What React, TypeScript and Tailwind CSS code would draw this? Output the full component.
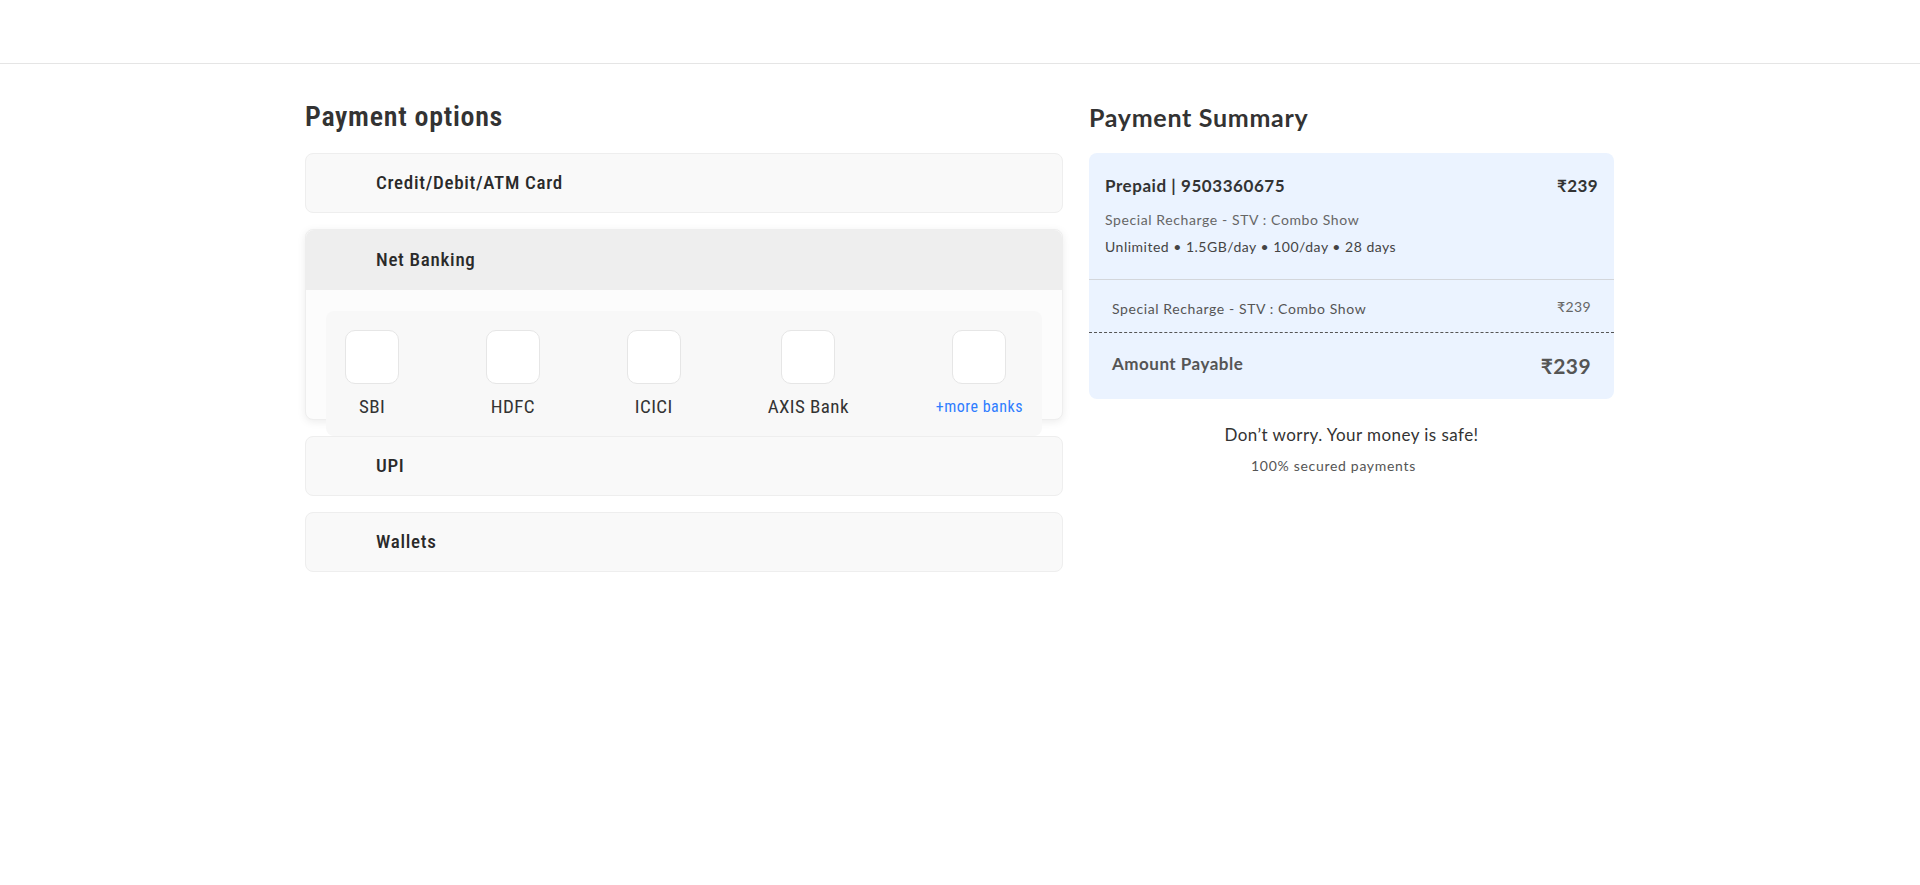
import React from 'react';

const narrow = { fontFamily: '"Liberation Sans Narrow", "Roboto Condensed", "DejaVu Sans Condensed", sans-serif' };
const round = { fontFamily: 'Lato, "Noto Sans", sans-serif' };

const banks = ['SBI', 'HDFC', 'ICICI', 'AXIS Bank'];

function OptionCard({ label }: { label: string }) {
  return (
    <div className="h-[60px] flex items-center pl-[70px] bg-[#f9f9f9] border border-[#eeeeee] rounded-lg">
      <span className="text-[19px] font-medium tracking-[0.7px] text-[#2a2a2a]">{label}</span>
    </div>
  );
}

export default function App() {
  return (
    <div className="min-h-screen bg-white">
      <div className="h-[64px] border-b border-[#e5e5e5]" />

      <div className="w-[1310px] mx-auto pt-[33px] flex gap-[26px] items-start">
        {/* left: payment options */}
        <div className="w-[758px]" style={narrow}>
          <h2 className="text-[28px] font-semibold tracking-[0.7px] text-[#333] h-[40px] leading-[40px] mb-[16px]">Payment options</h2>
          <div className="flex flex-col gap-[16px]">
            <OptionCard label="Credit/Debit/ATM Card" />

            <div className="h-[191px] bg-[#fcfcfc] border border-[#eeeeee] rounded-lg shadow-[0_2px_8px_rgba(0,0,0,0.08)]">
              <div className="h-[60px] flex items-center pl-[70px] bg-[#eeeeee] rounded-t-lg">
                <span className="text-[19px] font-medium tracking-[0.7px] text-[#2a2a2a]">Net Banking</span>
              </div>
              <div className="px-[20px] pt-[21px]">
                <div className="h-[125px] bg-[#f8f8f8] rounded-lg flex justify-between px-[19px] pt-[19px]">
                  {banks.map(b => (
                    <div key={b} className="flex flex-col items-center">
                      <div className="w-[54px] h-[54px] bg-white border border-[#e6e6e6] rounded-[10px]" />
                      <span className="mt-[9px] text-[19px] tracking-[0.4px] text-[#333]">{b}</span>
                    </div>
                  ))}
                  <div className="flex flex-col items-center">
                    <div className="w-[54px] h-[54px] bg-white border border-[#e6e6e6] rounded-[10px]" />
                    <span className="mt-[11px] text-[16px] tracking-[0.5px] text-[#2f7dff]">+more banks</span>
                  </div>
                </div>
              </div>
            </div>

            <OptionCard label="UPI" />
            <OptionCard label="Wallets" />
          </div>
        </div>

        {/* right: summary */}
        <div className="w-[525px]" style={round}>
          <h2 className="text-[25px] tracking-[0.7px] font-bold text-[#333] h-[40px] leading-[40px] mb-[16px]">Payment Summary</h2>
          <div className="bg-[#ebf3ff] rounded-lg">
            <div className="h-[126px] px-[16px] pt-[20px]">
              <div className="flex justify-between items-center">
                <span className="text-[17px] tracking-[0.55px] font-bold text-[#333]">Prepaid | 9503360675</span>
                <span className="text-[17px] tracking-[0.4px] font-bold text-[#333]">₹239</span>
              </div>
              <div className="mt-[10px] text-[14px] tracking-[0.6px] text-[#666]">Special Recharge - STV : Combo Show</div>
              <div className="mt-[6px] text-[14px] tracking-[0.5px] text-[#444]">Unlimited • 1.5GB/day • 100/day • 28 days</div>
            </div>
            <div className="border-t border-[#d3d6db] px-[23px] h-[53px] flex justify-between items-center">
              <span className="text-[14px] tracking-[0.6px] text-[#555] pt-[4px]">Special Recharge - STV : Combo Show</span>
              <span className="text-[14px] tracking-[0.4px] text-[#666]">₹239</span>
            </div>
            <div className="border-t border-dashed border-[#555] px-[23px] h-[67px] flex justify-between items-center">
              <span className="text-[17px] tracking-[0.5px] font-bold text-[#555] -mt-[4px]">Amount Payable</span>
              <span className="text-[21px] tracking-[0.4px] font-bold text-[#555]">₹239</span>
            </div>
          </div>
          <div className="text-center mt-[23px]">
            <div className="text-[17px] tracking-[0.45px] text-[#333]">Don’t worry. Your money is safe!</div>
            <div className="mt-[7px] text-[14px] tracking-[0.7px] text-[#555] pr-[36px]">100% secured payments</div>
          </div>
        </div>
      </div>
    </div>
  );
}
